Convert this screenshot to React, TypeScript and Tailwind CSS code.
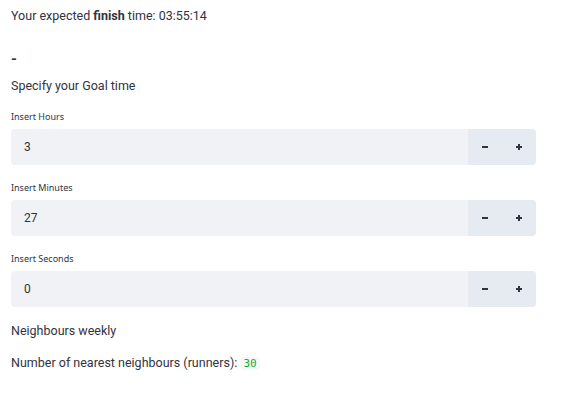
import React from 'react';

const font = { fontFamily: 'Roboto, "Noto Sans", sans-serif' };

interface NumberInputProps {
  label: string;
  value: string;
}

const NumberInput: React.FC<NumberInputProps> = ({ label, value }) => {
  return (
    <div className="flex flex-col">
      <label className="text-[9px] leading-[12px] text-[#31333f] mb-[6px]" style={{ fontFamily: '"Noto Sans", sans-serif' }}>{label}</label>
      <div className="flex h-[36px] w-[525px] rounded-[4px] overflow-hidden bg-[#f0f2f6]">
        <div className="flex-1 flex items-center pl-[13px] text-[12px] text-[#31333f]">{value}</div>
        <div className="flex w-[68px] bg-[#e6eaf1]">
          <button className="w-[34px] flex items-center justify-center">
            <svg width="8" height="8" viewBox="0 0 8 8"><rect x="1" y="3" width="6" height="2" fill="#31333f" /></svg>
          </button>
          <button className="w-[34px] flex items-center justify-center">
            <svg width="8" height="8" viewBox="0 0 8 8"><rect x="1" y="3" width="6" height="2" fill="#31333f" /><rect x="3" y="1" width="2" height="6" fill="#31333f" /></svg>
          </button>
        </div>
      </div>
    </div>
  );
};

export default function App() {
  return (
    <div className="w-[562px] h-[414px] bg-white text-[#31333f] pl-[11px]" style={font}>
      <p className="text-[12.5px] leading-[16px] pt-[8px]">
        Your expected <b className="font-bold">finish</b> time: 03:55:14
      </p>
      <p className="text-[15px] font-bold leading-[16px] mt-[27px]">-</p>
      <p className="text-[12.5px] leading-[16px] mt-[11px]">Specify your Goal time</p>
      <div className="flex flex-col gap-[17px] mt-[17px]">
        <NumberInput label="Insert Hours" value="3" />
        <NumberInput label="Insert Minutes" value="27" />
        <NumberInput label="Insert Seconds" value="0" />
      </div>
      <p className="text-[12.5px] leading-[16px] mt-[16px]">Neighbours weekly</p>
      <p className="text-[12.5px] leading-[16px] mt-[16px]">
        Number of nearest neighbours (runners):{' '}
        <code className="text-[11px] text-[#09ab3b] bg-[#f6f7f9] px-[3px] rounded-[3px]" style={{ fontFamily: '"DejaVu Sans Mono", monospace' }}>30</code>
      </p>
    </div>
  );
}
